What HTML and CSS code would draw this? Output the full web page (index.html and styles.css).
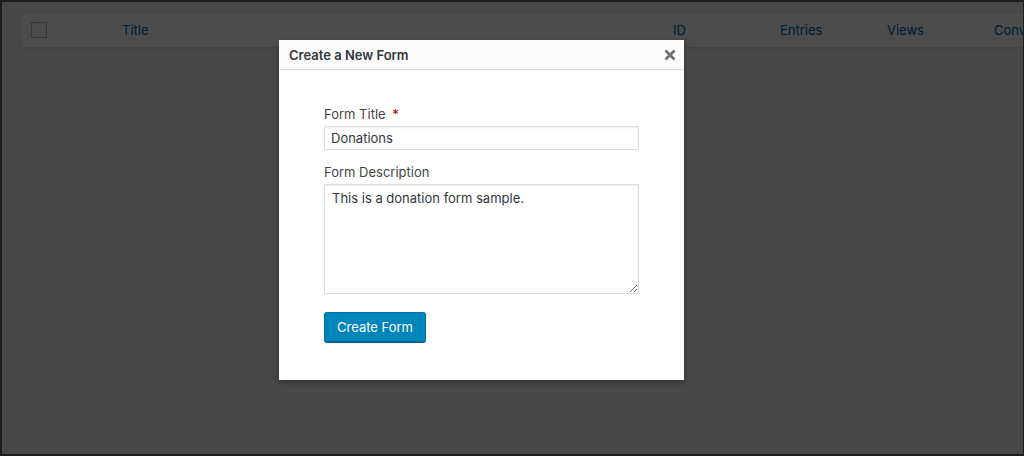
FILE: index.html
```html
<!DOCTYPE html>
<html lang="en">
  <head>
    <title>Forms</title>
    <link rel="stylesheet" href="styles.css">
  </head>
  <body>
    <div class="screen">
      <!-- Forms list behind the modal -->
      <div class="forms-table">
        <div class="forms-head">
          <div class="col col-check"><span class="checkbox"></span></div>
          <div class="col col-title"><a href="#">Title</a></div>
          <div class="col col-num"><a href="#">ID</a></div>
          <div class="col col-num"><a href="#">Entries</a></div>
          <div class="col col-num"><a href="#">Views</a></div>
          <div class="col col-num"><a href="#">Conversion</a></div>
        </div>
      </div>

      <div class="overlay"></div>

      <!-- Create form modal -->
      <div class="modal">
        <div class="modal-header">
          <span class="modal-title">Create a New Form</span>
          <button class="modal-close" aria-label="Close">
            <svg width="12" height="12" viewBox="0 0 12 12">
              <path d="M1.5 1.5 L10.5 10.5 M10.5 1.5 L1.5 10.5" stroke="#707070" stroke-width="2.8" stroke-linecap="butt" />
            </svg>
          </button>
        </div>
        <div class="modal-body">
          <label class="field-label">Form Title <span class="required">*</span></label>
          <input class="field-input" type="text" value="Donations">

          <label class="field-label">Form Description</label>
          <textarea class="field-textarea">This is a donation form sample.</textarea>

          <button class="create-button">Create Form</button>
        </div>
      </div>
    </div>
  </body>
</html>
```

FILE: styles.css
```css
html,
body {
  margin: 0;
  height: 100%;
  overflow: hidden;
}
body {
  background-color: #1e1e1e;
  font-family: Inter, Roboto, "Liberation Sans", sans-serif;
  color: #32373c;
}
.screen {
  position: relative;
  box-sizing: border-box;
  height: 454px;
  width: 1021px;
  margin: 0 0 0 2px;
  border-top: 2px solid #1e1e1e;
  background-color: #f1f1f1;
  overflow: hidden;
  padding: 10px 0 0 18px;
}
.forms-table {
  width: 1100px;
  background-color: #fff;
  border: 1px solid #e5e5e5;
}
.forms-head {
  display: grid;
  grid-template-columns: 91px 551px 107px 107px 107px 137px;
  height: 34px;
  align-items: center;
  border-bottom: 1px solid #e1e1e1;
}
.col {
  padding-left: 10px;
  font-size: 13px;
}
.col a {
  color: #0066a0;
  text-decoration: none;
}
.checkbox {
  display: block;
  width: 14px;
  height: 14px;
  border: 1px solid #b4b9be;
  box-shadow: inset 0 1px 2px rgba(0, 0, 0, 0.1);
}
.overlay {
  position: absolute;
  inset: 0;
  background-color: #000;
  opacity: 0.7;
}
.modal {
  position: absolute;
  left: 277px;
  top: 38px;
  width: 405px;
  height: 340px;
  background-color: #fff;
  box-shadow: 0 3px 6px rgba(0, 0, 0, 0.3);
}
.modal-header {
  display: flex;
  align-items: center;
  justify-content: space-between;
  height: 29px;
  padding: 0 8px 0 10px;
  background-color: #fcfcfc;
  border-bottom: 1px solid #dddddd;
}
.modal-title {
  font-size: 13px;
  font-weight: 600;
  color: #32373c;
}
.modal-close {
  background: none;
  border: none;
  padding: 0;
  display: flex;
  cursor: pointer;
}
.modal-body {
  display: flex;
  flex-direction: column;
  align-items: flex-start;
  padding: 36px 45px 0 45px;
}
.field-label {
  font-size: 13px;
  color: #444;
  margin-bottom: 4px;
}
.required {
  color: #a00;
  margin-left: 3px;
}
.field-input,
.field-textarea {
  box-sizing: border-box;
  width: 315px;
  border: 1px solid #dddddd;
  box-shadow: inset 0 1px 2px rgba(0, 0, 0, 0.07);
  font-family: inherit;
  font-size: 13px;
  color: #32373c;
  margin: 0 0 14px 0;
  outline: none;
}
.field-input {
  height: 24px;
  padding: 0 6px;
}
.field-textarea {
  height: 110px;
  padding: 5px 7px;
  margin-bottom: 18px;
  resize: vertical;
}
.create-button {
  height: 30px;
  padding: 0 12px;
  background-color: #0085ba;
  border: 1px solid #0073aa;
  border-bottom-color: #006799;
  border-radius: 3px;
  box-shadow: 0 1px 0 #006799;
  color: #fff;
  font-family: inherit;
  font-size: 13px;
  cursor: pointer;
}
```
